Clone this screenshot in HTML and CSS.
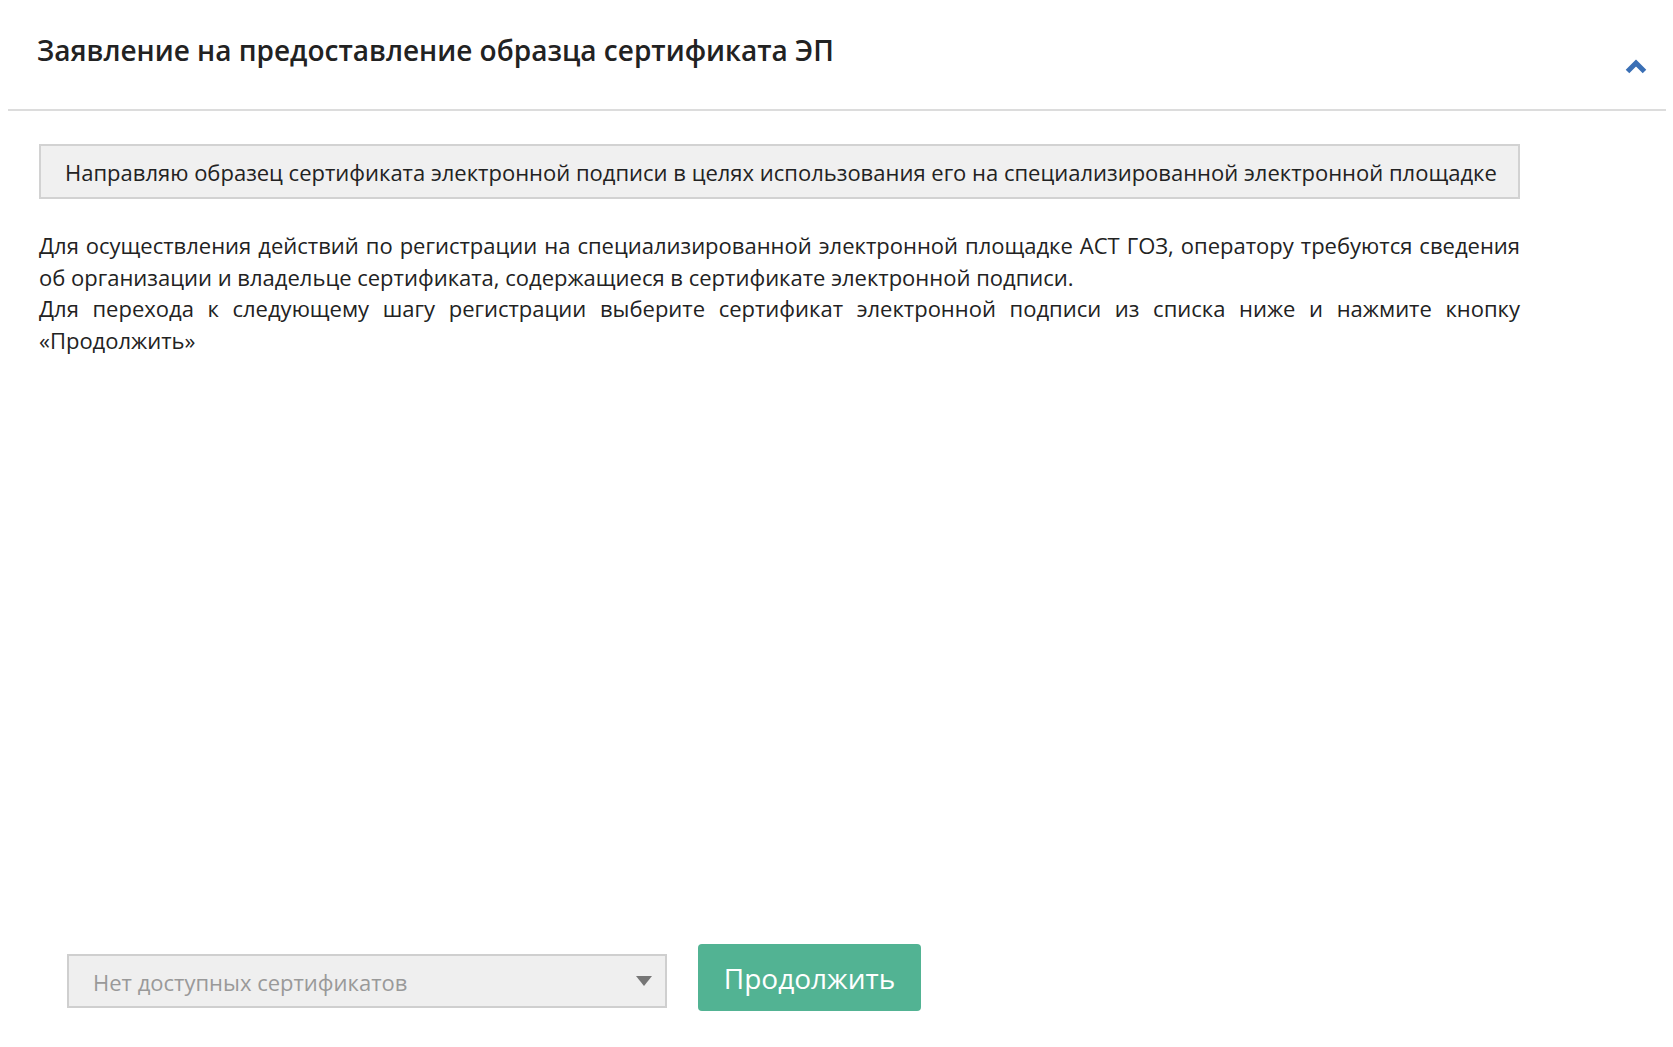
FILE: index.html
```html
<!DOCTYPE html>
<html lang="ru">
<head>
  <meta charset="UTF-8">
  <title>Заявление на предоставление образца сертификата ЭП</title>
  <meta name="viewport" content="width=device-width, initial-scale=1.0">
  <link rel="stylesheet" href="styles.css">
</head>
<body>
  <div class="panel">
    <div class="panel-head">
      <h2>Заявление на предоставление образца сертификата ЭП</h2>
      <button class="toggle" type="button" aria-label="Свернуть">
        <svg width="22" height="15" viewBox="0 0 22 15">
          <path d="M2.5 12.5 L11 4 L19.5 12.5" fill="none" stroke="#3a6fb5" stroke-width="5" stroke-linejoin="miter"/>
        </svg>
      </button>
    </div>

    <div class="panel-body">
      <div class="statement">Направляю образец сертификата электронной подписи в целях использования его на специализированной электронной площадке</div>

      <p class="info">
        Для осуществления действий по регистрации на специализированной электронной площадке АСТ ГОЗ, оператору требуются сведения об организации и владельце сертификата, содержащиеся в сертификате электронной подписи.<br>
        Для перехода к следующему шагу регистрации выберите сертификат электронной подписи из списка ниже и нажмите кнопку «Продолжить»
      </p>
    </div>

    <div class="actions">
      <div class="select">
        <span>Нет доступных сертификатов</span>
        <i class="caret"></i>
      </div>
      <button class="btn-next" type="button">Продолжить</button>
    </div>
  </div>
</body>
</html>
```

FILE: styles.css
```css
* { box-sizing: border-box; margin: 0; padding: 0; }
html, body {
  height: 100%;
  background: #fff;
  font-family: 'Open Sans', 'Noto Sans', sans-serif;
  color: #333;
}
.panel {
  height: 100%;
  display: flex;
  flex-direction: column;
  padding: 0 7px 0 8px;
}
.panel-head {
  display: flex;
  justify-content: space-between;
  align-items: flex-start;
  height: 111px;
  padding: 31px 19px 0 29px;
  border-bottom: 2px solid #dcdcdc;
}
h2 {
  font-size: 28px;
  font-weight: 600;
  color: #222;
}
.toggle {
  margin-top: 28px;
  background: none;
  border: none;
  cursor: pointer;
  line-height: 0;
}
.panel-body {
  flex: 1;
  padding: 33px 146px 0 31px;
}
.statement {
  height: 55px;
  padding: 0 24px;
  line-height: 52px;
  background: #f0f0f0;
  border: 2px solid #d2d2d2;
  font-size: 22px;
  color: #222;
  white-space: nowrap;
  overflow: hidden;
}
.info {
  margin-top: 31px;
  font-size: 22px;
  line-height: 31.6px;
  text-align: justify;
  color: #222;
}
.actions {
  display: flex;
  align-items: center;
  gap: 31px;
  padding: 0 0 36px 59px;
}
.select {
  position: relative;
  width: 600px;
  height: 54px;
  margin-top: 6px;
  padding: 3px 24px 0;
  display: flex;
  align-items: center;
  background: #efefef;
  border: 2px solid #cfcfcf;
  font-size: 22px;
  color: #999;
}
.caret {
  position: absolute;
  right: 13px;
  top: 20px;
  border-left: 8px solid transparent;
  border-right: 8px solid transparent;
  border-top: 10px solid #767676;
}
.btn-next {
  width: 223px;
  height: 67px;
  background: #52b393;
  color: #fff;
  border: none;
  border-radius: 4px;
  font-family: 'Open Sans', sans-serif;
  font-size: 28px;
  cursor: pointer;
}
```
